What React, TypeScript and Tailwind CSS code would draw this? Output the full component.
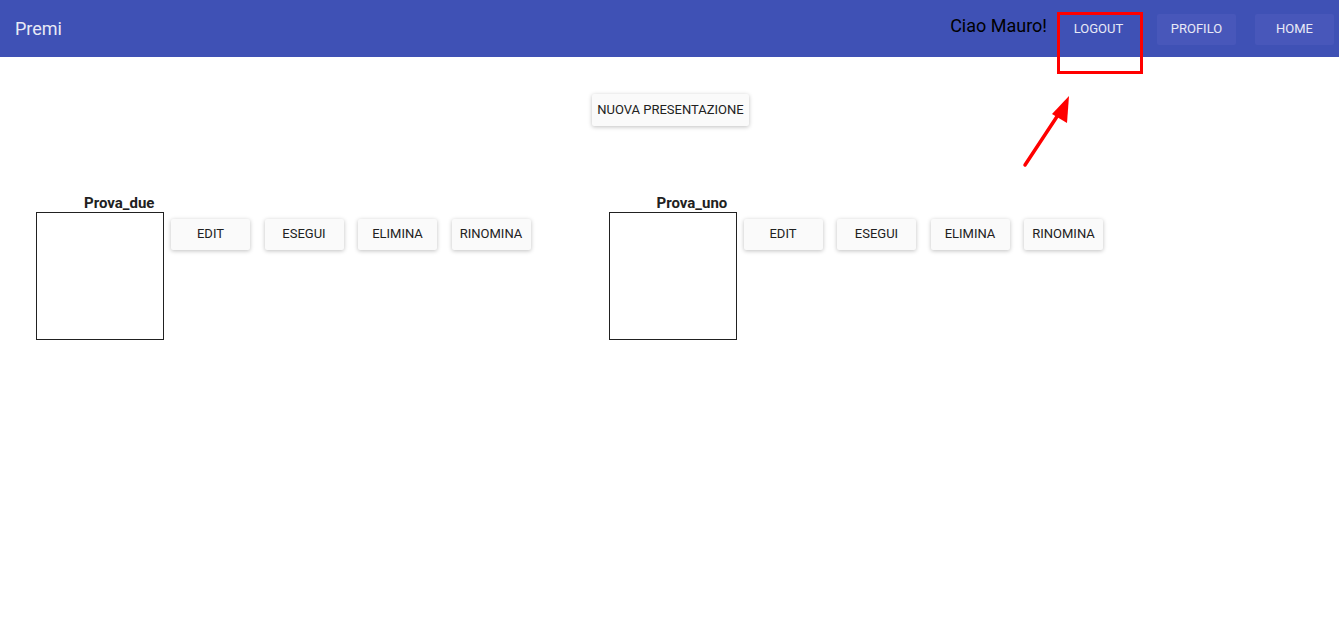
import React from 'react';

/**
 * Presentations page - header with greeting and nav, list of presentations
 */

const FONT = { fontFamily: 'Roboto, "Liberation Sans", sans-serif' };

function NavButton({ label, filled }: { label: string; filled?: boolean }) {
  return (
    <div
      className={`w-[79px] h-[31px] flex items-center justify-center rounded-[2px] text-[13px] text-[#e8eaf6] ${
        filled ? 'bg-[#4857ba]' : ''
      }`}
    >
      {label}
    </div>
  );
}

function ActionButton({ label }: { label: string }) {
  return (
    <div className="w-[79px] h-[31px] flex items-center justify-center bg-[#fafafa] rounded-[2px] text-[13px] text-[#212121] shadow-[0_1px_4px_rgba(0,0,0,0.25)]">
      {label}
    </div>
  );
}

function PresentationCard({ title }: { title: string }) {
  return (
    <div className="w-[572.5px] flex flex-col">
      <div className="pl-[48px] h-[17px] text-[15px] leading-[17px] font-bold text-[#212121]">{title}</div>
      <div className="flex items-start">
        <div className="w-[128px] h-[128px] border border-[#212121] bg-white flex-shrink-0" />
        <div className="flex gap-[14.5px] ml-[7px] mt-[6.5px]">
          <ActionButton label="EDIT" />
          <ActionButton label="ESEGUI" />
          <ActionButton label="ELIMINA" />
          <ActionButton label="RINOMINA" />
        </div>
      </div>
    </div>
  );
}

export default function App() {
  return (
    <div className="relative w-[1339px] h-[636px] bg-white overflow-hidden" style={FONT}>
      {/* Header */}
      <div className="h-[57px] bg-[#3f51b5] flex items-center pl-[15px] pr-[5px]">
        <div className="text-[18px] text-[#e8eaf6] flex-1">Premi</div>
        <div className="text-[18px] text-black mb-[6px] mr-[12px]">Ciao Mauro!</div>
        <div className="flex gap-[19px] mt-[1px]">
          <NavButton label="LOGOUT" />
          <NavButton label="PROFILO" filled />
          <NavButton label="HOME" filled />
        </div>
      </div>

      {/* New presentation */}
      <div className="flex justify-center mt-[37px] pl-[2px]">
        <div className="w-[157px] h-[32px] flex items-center justify-center bg-[#fafafa] rounded-[2px] text-[13px] text-[#212121] shadow-[0_1px_4px_rgba(0,0,0,0.25)]">
          NUOVA PRESENTAZIONE
        </div>
      </div>

      {/* Presentations */}
      <div className="flex pl-[36px] mt-[69px]">
        <PresentationCard title="Prova_due" />
        <PresentationCard title="Prova_uno" />
      </div>

      {/* Annotation overlay */}
      <div className="absolute left-[1057px] top-[12px] w-[86px] h-[62px] border-[3px] border-[#ff0000]" />
      <svg className="absolute left-[1015px] top-[90px]" width="70" height="85" viewBox="0 0 70 85">
        <line x1="10" y1="75" x2="45" y2="22" stroke="#ff0000" strokeWidth="3.5" strokeLinecap="round" />
        <polygon points="54,6 52,33 37,24" fill="#ff0000" />
      </svg>
    </div>
  );
}
